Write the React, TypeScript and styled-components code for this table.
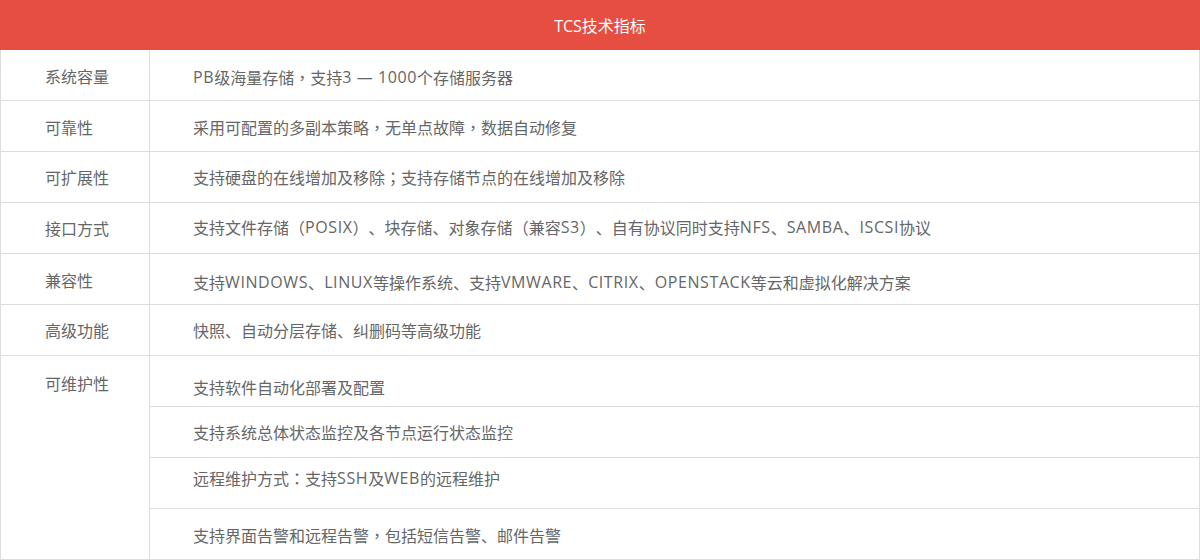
import React from "react";
import styled, { createGlobalStyle } from "styled-components";

const GlobalStyle = createGlobalStyle`
  html, body { margin: 0; padding: 0; background: #ffffff; }
  body {
    font-family: "Open Sans", "Noto Sans CJK SC", sans-serif;
    font-size: 16px;
    color: #666666;
    text-spacing-trim: space-all;
  }
`;

const Table = styled.div`
  width: 1200px;
  box-sizing: border-box;
  border-left: 1px solid #dddddd;
  border-right: 1px solid #dddddd;
`;

const Header = styled.div`
  height: 50px;
  margin: 0 -1px;
  background: #e64e42;
  color: #ffffff;
  font-size: 16px;
  display: flex;
  align-items: center;
  justify-content: center;
`;

const Section = styled.div`
  display: grid;
  grid-template-columns: 149px 1fr;
`;

const Label = styled.div<{ $top?: boolean; $shift?: number }>`
  border-right: 1px solid #dddddd;
  border-bottom: 1px solid #dddddd;
  display: flex;
  justify-content: flex-start;
  align-items: ${(p) => (p.$top ? "flex-start" : "center")};
  padding-top: ${(p) => (p.$top ? 15 : 0)}px;
  padding-left: 44px;
  box-sizing: border-box;
  & > span {
    transform: translateY(${(p) => p.$shift ?? 0}px);
  }
`;

const Values = styled.div`
  display: flex;
  flex-direction: column;
`;

const Value = styled.div<{ $shift?: number }>`
  height: 51px;
  box-sizing: border-box;
  border-bottom: 1px solid #dddddd;
  display: flex;
  align-items: center;
  padding-left: 43px;
  padding-top: ${(p) => Math.max(0, (p.$shift ?? 0) * 2)}px;
  padding-bottom: ${(p) => Math.max(0, -(p.$shift ?? 0) * 2)}px;
  white-space: pre;
`;

const Latin = styled.span`
  font-family: "Open Sans", sans-serif;
  letter-spacing: 0.6px;
`;

const Punct = styled.span`
  font-family: "Noto Sans CJK TC", "Noto Sans CJK SC", sans-serif;
`;

const LATIN = /^[A-Za-z0-9]+(?: — [A-Za-z0-9]+)*$/;
const PUNCT = /^[，：；（）]$/;

function renderText(text: string) {
  const parts = text
    .split(/([A-Za-z0-9]+(?: — [A-Za-z0-9]+)*|[，：；（）])/)
    .filter((p) => p !== "");
  return parts.map((p, i) => {
    if (LATIN.test(p)) return <Latin key={i}>{p}</Latin>;
    if (PUNCT.test(p)) return <Punct key={i}>{p}</Punct>;
    return <React.Fragment key={i}>{p}</React.Fragment>;
  });
}

type Spec = { label: string; labelShift?: number; values: { text: string; shift?: number }[] };

const specs: Spec[] = [
  { label: "系统容量", labelShift: 1, values: [{ text: "PB级海量存储，支持3 — 1000个存储服务器", shift: 1.5 }] },
  { label: "可靠性", labelShift: 1, values: [{ text: "采用可配置的多副本策略，无单点故障，数据自动修复", shift: 1 }] },
  { label: "可扩展性", values: [{ text: "支持硬盘的在线增加及移除；支持存储节点的在线增加及移除" }] },
  { label: "接口方式", values: [{ text: "支持文件存储（POSIX）、块存储、对象存储（兼容S3）、自有协议同时支持NFS、SAMBA、ISCSI协议", shift: -1.5 }] },
  { label: "兼容性", labelShift: 1, values: [{ text: "支持WINDOWS、LINUX等操作系统、支持VMWARE、CITRIX、OPENSTACK等云和虚拟化解决方案", shift: 3 }] },
  { label: "高级功能", values: [{ text: "快照、自动分层存储、纠删码等高级功能" }] },
  {
    label: "可维护性",
    values: [
      { text: "支持软件自动化部署及配置", shift: 6 },
      { text: "支持系统总体状态监控及各节点运行状态监控" },
      { text: "远程维护方式：支持SSH及WEB的远程维护", shift: -5 },
      { text: "支持界面告警和远程告警，包括短信告警、邮件告警", shift: 1 },
    ],
  },
];

export default function App() {
  return (
    <>
      <GlobalStyle />
      <Table>
        <Header>TCS技术指标</Header>
        {specs.map((s) => (
          <Section key={s.label}>
            <Label $top={s.values.length > 1} $shift={s.labelShift}>
              <span>{s.label}</span>
            </Label>
            <Values>
              {s.values.map((v) => (
                <Value key={v.text} $shift={v.shift}>{renderText(v.text)}</Value>
              ))}
            </Values>
          </Section>
        ))}
      </Table>
    </>
  );
}
